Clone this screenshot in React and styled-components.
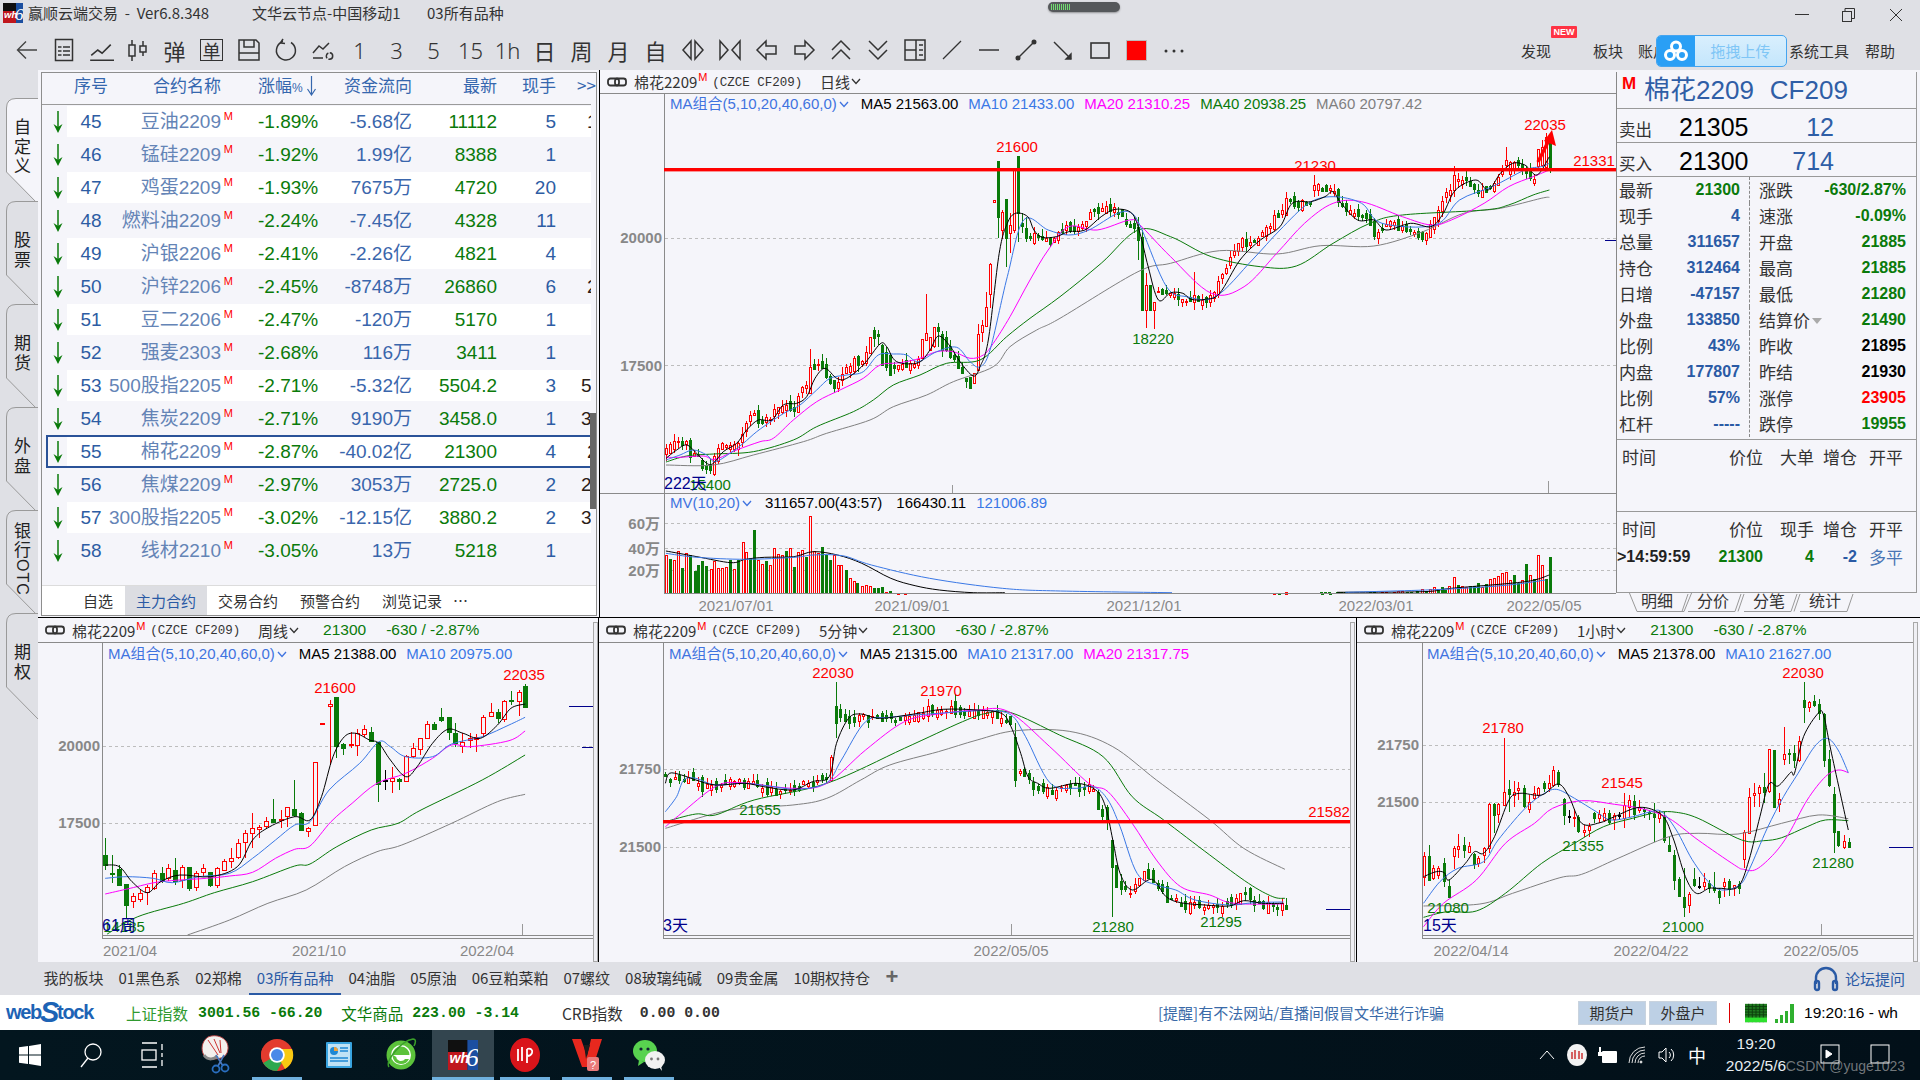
import React from 'react';
import styled, { createGlobalStyle } from 'styled-components';

const CJK = '"Noto Sans CJK SC", sans-serif';
const LAT = '"Liberation Sans", "Noto Sans CJK SC", sans-serif';
const MONO = '"Liberation Mono", "Noto Sans CJK SC", monospace';
const CHROME = '#dfe0e5';
const PANEL = '#f5f5fa';
const GREEN = '#0a7a0a';
const RED = '#ff0000';
const BLUE = '#2a5aa5';
const MA_BLUE = '#3a78e6';
const MAGENTA = '#ff00ff';
const NAVY = '#00008b';

const Global = createGlobalStyle`
  html, body { margin: 0; padding: 0; width: 1920px; height: 1080px; overflow: hidden; background: ${CHROME}; }
  * { box-sizing: border-box; }
`;

/* ---------- chart helpers ---------- */
const mk = (ox, oy, sx, sy) => (pts) => pts.map(([x, y, ...r]) => (r.length
  ? [ox + x / sx, oy + y / sy, oy + r[0] / sy, oy + r[1] / sy, oy + r[2] / sy, r[3]]
  : [ox + x / sx, oy + y / sy]));

const smooth = (p) => {
  let d = `M${p[0][0].toFixed(1)} ${p[0][1].toFixed(1)}`;
  for (let i = 0; i < p.length - 1; i += 1) {
    const a = p[Math.max(i - 1, 0)], b = p[i], c = p[i + 1], e = p[Math.min(i + 2, p.length - 1)];
    const c1x = b[0] + (c[0] - a[0]) / 6, c1y = b[1] + (c[1] - a[1]) / 6;
    const c2x = c[0] - (e[0] - b[0]) / 6, c2y = c[1] - (e[1] - b[1]) / 6;
    d += `C${c1x.toFixed(1)} ${c1y.toFixed(1)} ${c2x.toFixed(1)} ${c2y.toFixed(1)} ${c[0].toFixed(1)} ${c[1].toFixed(1)}`;
  }
  return d;
};

const interp = (p, x) => {
  if (x <= p[0][0]) return p[0][1];
  for (let i = 0; i < p.length - 1; i += 1) {
    if (x <= p[i + 1][0]) {
      const t = (x - p[i][0]) / ((p[i + 1][0] - p[i][0]) || 1);
      return p[i][1] + t * (p[i + 1][1] - p[i][1]);
    }
  }
  return p[p.length - 1][1];
};

const gen = (closes, x0, pitch, x1, seed, bn, wn, over) => {
  let s = seed;
  const rnd = () => { s = (s * 1664525 + 1013904223) % 4294967296; return s / 4294967296; };
  const out = [];
  const ov = {};
  over.forEach((c) => { ov[Math.round((c[0] - x0) / pitch)] = c; });
  let prev = interp(closes, x0);
  const n = Math.round((x1 - x0) / pitch);
  for (let i = 0; i <= n; i += 1) {
    const x = x0 + i * pitch;
    const c = interp(closes, x) + (rnd() - 0.5) * bn * 0.7;
    const o = prev + (rnd() - 0.5) * bn;
    const top = Math.min(o, c);
    const bot = Math.max(o, c) + 1;
    const wt = top - rnd() * wn;
    const wb = bot + rnd() * wn;
    const col = c < o ? 'r' : 'g';
    out.push(ov[i] ? [x, ov[i][1], ov[i][2], ov[i][3], ov[i][4], ov[i][5]] : [x, top, bot, wt, wb, col]);
    prev = c;
  }
  return out;
};

const colorOf = { r: RED, g: GREEN, k: '#000' };

const Candle = ({ c, w }) => {
  const [x, bt, bb, wt, wb, col] = c;
  const X = Math.round(x) + 0.5;
  const color = colorOf[col];
  return (
    <g shapeRendering="crispEdges">
      <line x1={X} x2={X} y1={wt} y2={wb} stroke={color} />
      <rect x={X - w / 2} y={Math.round(bt) + 0.5} width={w} height={Math.max(Math.round(bb - bt), 1)}
        fill={col === 'g' ? GREEN : PANEL} stroke={color} />
    </g>
  );
};

const MaLine = ({ pts, color }) => <path d={smooth(pts)} fill="none" stroke={color} strokeWidth="1" />;

const Grid = ({ x1, x2, y }) => (
  <line x1={x1} x2={x2} y1={y + 0.5} y2={y + 0.5} stroke="#bdbdbd" strokeDasharray="3 3" shapeRendering="crispEdges" />
);

const PriceText = styled.text`
  font: 15px ${LAT};
  fill: ${(p) => p.$c};
  text-anchor: ${(p) => p.$a || 'middle'};
`;
const AxisText = styled.text`
  font: bold 15px ${LAT};
  fill: #888;
  text-anchor: end;
`;
const DateText = styled.text`
  font: 15px ${LAT};
  fill: #888;
  text-anchor: middle;
`;
const SpanText = styled.text`
  font: 16px ${LAT};
  fill: ${NAVY};
`;

/* ---------- main chart data ---------- */
const z12 = mk(660, 250, 3, 3);
const z2 = mk(640, 0, 2.45, 3);
const z3 = mk(1280, 0, 2.45, 3);
const z5 = mk(1280, 340, 2.45, 3);
const z8 = mk(600, 480, 2.063, 3);

const mainCloses = [
  ...z12([[18, 600], [50, 575], [80, 575], [90, 610], [115, 625], [130, 655], [150, 660], [165, 610], [190, 580], [230, 580], [245, 560], [270, 490], [285, 490], [300, 520], [330, 500], [345, 470], [380, 470], [405, 470], [415, 430], [440, 410], [450, 360], [480, 340], [500, 380], [525, 410], [550, 370], [585, 330], [610, 340], [630, 270], [660, 250], [670, 340], [690, 350], [720, 335], [760, 340], [775, 330], [790, 275], [810, 290], [835, 235], [850, 270], [870, 320], [900, 350], [920, 395], [940, 395], [955, 260], [970, 230], [980, 180], [990, 60]]),
  ...z2([[878, 650], [886, 640], [898, 700], [908, 680], [918, 510], [928, 720], [940, 680], [948, 710], [960, 705], [980, 710], [1005, 725], [1025, 690], [1040, 680], [1075, 690], [1105, 640], [1130, 630], [1150, 620], [1170, 630], [1190, 660], [1210, 680], [1222, 720], [1232, 930], [1245, 930], [1260, 870], [1280, 880], [1300, 880], [1320, 900], [1345, 900], [1375, 900], [1400, 890], [1425, 820], [1450, 760], [1475, 720], [1500, 730], [1530, 690], [1555, 650]]),
  ...z3([[0, 640], [15, 600], [40, 610], [75, 610], [85, 560], [105, 565], [130, 575], [150, 620], [170, 640], [210, 640], [235, 710], [245, 690], [265, 670], [300, 680], [330, 690], [350, 720], [370, 670], [385, 630], [415, 570], [430, 530], [460, 540], [480, 570], [500, 575], [520, 550], [540, 520], [570, 490], [590, 495], [605, 520], [625, 550], [635, 470], [645, 440], [663, 430]]),
];
const mainOver = [
  ...z12([[990, 42, 132, 38, 175, 'r'], [978, 172, 230, 125, 232, 'r'], [967, 225, 245, 210, 275, 'r'], [955, 252, 360, 222, 362, 'r'], [943, 370, 400, 368, 402, 'r'], [931, 380, 412, 380, 412, 'g'], [919, 385, 395, 385, 415, 'g'], [800, 275, 285, 132, 300, 'r'], [788, 268, 325, 268, 325, 'r'], [835, 232, 245, 220, 290, 'g'], [847, 253, 300, 243, 320, 'g'], [823, 232, 290, 232, 295, 'r'], [811, 262, 302, 262, 302, 'r'], [450, 352, 430, 296, 432, 'r'], [642, 240, 265, 232, 290, 'g'], [655, 252, 258, 240, 285, 'g'], [630, 262, 310, 262, 312, 'r'], [666, 285, 345, 282, 345, 'g'], [691, 315, 375, 312, 375, 'g']]),
  ...z2([[868, 600, 606, 600, 606, 'r'], [878, 483, 650, 483, 715, 'g'], [886, 635, 690, 630, 718, 'r'], [898, 597, 715, 597, 800, 'g'], [908, 675, 700, 640, 760, 'r'], [918, 505, 690, 505, 700, 'r'], [928, 468, 640, 468, 725, 'g'], [938, 670, 680, 640, 700, 'g'], [948, 685, 715, 650, 725, 'g'], [702, 1000, 1020, 882, 1020, 'r'], [1222, 680, 720, 650, 780, 'g'], [1232, 710, 930, 690, 930, 'g'], [1242, 855, 930, 820, 985, 'r'], [1251, 855, 930, 855, 932, 'g'], [1261, 905, 930, 905, 988, 'r'], [1358, 885, 905, 815, 930, 'r']]),
  ...z3([[85, 555, 570, 525, 590, 'r'], [428, 525, 570, 498, 590, 'r'], [555, 480, 495, 440, 510, 'r'], [632, 448, 500, 448, 505, 'r'], [642, 440, 495, 420, 500, 'r'], [652, 410, 500, 400, 505, 'r'], [663, 430, 510, 420, 518, 'g']]),
];
const mainCandles = gen(mainCloses, 666, 4, 1551, 7, 9, 7, mainOver);

const mainMA = {
  ma5: [...z12([[18, 625], [50, 600], [80, 585], [110, 610], [140, 640], [160, 640], [190, 605], [230, 580], [260, 540], [295, 510], [335, 510], [370, 465], [410, 460], [440, 440], [465, 385], [495, 355], [530, 385], [560, 385], [610, 345], [660, 282], [680, 290], [710, 335], [775, 338], [810, 300], [835, 258], [870, 288], [900, 335], [940, 378], [960, 350], [985, 270]]),
    ...z2([[880, 760], [900, 670], [920, 640], [950, 650], [965, 690], [985, 712], [1020, 710], [1050, 695], [1090, 690], [1130, 650], [1165, 628], [1205, 640], [1225, 700], [1245, 800], [1270, 900], [1300, 878], [1330, 880], [1350, 898], [1385, 898], [1420, 880], [1470, 780], [1520, 720], [1568, 680]]),
    ...z3([[30, 610], [75, 605], [110, 590], [130, 575], [150, 610], [190, 660], [230, 660], [260, 690], [320, 670], [370, 680], [400, 640], [430, 570], [480, 540], [510, 570], [540, 520], [570, 490], [600, 495], [630, 525], [660, 470]])],
  ma10: [...z12([[18, 630], [60, 615], [100, 600], [140, 615], [165, 635], [210, 610], [250, 580], [290, 545], [340, 510], [380, 485], [420, 465], [470, 420], [510, 385], [560, 375], [610, 365], [655, 315], [700, 312], [740, 315], [775, 335], [830, 305], [890, 292], [930, 335], [960, 350], [990, 300]]),
    ...z2([[900, 830], [940, 660], [1000, 690], [1050, 705], [1100, 690], [1170, 640], [1205, 640], [1230, 690], [1290, 860], [1340, 890], [1410, 890], [1500, 780], [1568, 690]]),
    ...z3([[70, 610], [130, 590], [200, 610], [250, 670], [380, 675], [440, 600], [520, 560], [600, 510], [640, 500], [660, 490]])],
  ma20: [...z12([[18, 622], [60, 622], [130, 618], [165, 628], [230, 600], [300, 575], [340, 565], [400, 510], [470, 455], [540, 420], [610, 385], [660, 345], [720, 338], [780, 325], [830, 305], [880, 305], [930, 325], [970, 315], [1000, 280], [1050, 200], [1110, 90]]),
    ...z2([[1000, 750], [1050, 680], [1120, 690], [1200, 660], [1225, 675], [1300, 770], [1400, 880], [1480, 860], [1560, 760]]),
    ...z3([[60, 670], [130, 610], [200, 605], [300, 650], [370, 675], [420, 660], [500, 610], [560, 560], [620, 530], [660, 510]])],
  ma40: [...z12([[18, 636], [80, 618], [160, 612], [280, 605], [400, 570], [470, 530], [580, 485], [640, 450], [700, 405], [780, 375], [860, 340], [960, 330], [1040, 260], [1110, 205], [1200, 140]]),
    ...z2([[1130, 790], [1220, 690], [1300, 710], [1400, 770], [1520, 800]]),
    ...z3([[40, 798], [130, 730], [220, 670], [300, 645], [500, 630], [560, 615], [620, 585], [660, 570]])],
  ma60: [...z12([[18, 645], [160, 645], [280, 615], [430, 575], [500, 550], [630, 510], [700, 470], [800, 435], [880, 395], [1000, 350], [1050, 290], [1130, 240], [1200, 205]]),
    ...z2([[1220, 815], [1300, 790], [1420, 752], [1560, 762]]),
    ...z3([[100, 737], [230, 738], [350, 695], [450, 640], [540, 625], [640, 595], [660, 592]])],
};

const volFront = [[136, 225, 'r'], [145, 237, 'g'], [153, 240, 'r'], [161, 213, 'r'], [170, 263, 'g'], [178, 218, 'r'], [186, 225, 'g'], [195, 272, 'g'], [203, 255, 'g'], [211, 243, 'g'], [219, 258, 'g'], [228, 266, 'r'], [236, 243, 'r'], [244, 263, 'r'], [252, 265, 'r'], [260, 262, 'r'], [268, 240, 'g'], [277, 267, 'r'], [285, 240, 'g'], [294, 186, 'r'], [302, 216, 'r'], [310, 233, 'g'], [318, 150, 'g'], [326, 240, 'r'], [335, 252, 'r'], [343, 243, 'g'], [351, 255, 'r'], [359, 203, 'r'], [367, 222, 'r'], [375, 226, 'r'], [384, 212, 'g'], [392, 203, 'r'], [400, 262, 'g'], [408, 215, 'r'], [417, 210, 'r'], [425, 230, 'g'], [433, 108, 'r'], [441, 213, 'r'], [449, 218, 'r'], [458, 200, 'g'], [466, 225, 'g'], [474, 240, 'g'], [482, 224, 'r'], [490, 255, 'r'], [498, 255, 'r'], [507, 270, 'g'], [515, 295, 'r'], [523, 303, 'r'], [531, 308, 'g'], [540, 318, 'r'], [548, 315, 'r'], [556, 318, 'r'], [565, 325, 'g'], [573, 325, 'g'], [581, 322, 'g'], [590, 337, 'r'], [598, 334, 'g'], [615, 338, 'r'], [630, 338, 'r'], [1390, 338, 'r'], [1400, 338, 'g'], [1415, 338, 'r'], [1490, 338, 'g'], [1505, 338, 'g'], [1522, 335, 'g'], [1540, 337, 'g']]
  .map(([x, y, c]) => [600 + x / 2.063, 480 + y / 3, c]);
const volBack = [[15, 757, 'r'], [100, 757, 'g'], [110, 757, 'g'], [120, 757, 'g'], [140, 755, 'g'], [150, 757, 'g'], [160, 755, 'g'], [220, 755, 'g'], [230, 755, 'g'], [250, 755, 'r'], [260, 755, 'r'], [280, 755, 'r'], [290, 752, 'r'], [300, 752, 'r'], [310, 755, 'g'], [320, 755, 'g'], [335, 752, 'g'], [348, 748, 'r'], [357, 752, 'g'], [367, 748, 'r'], [377, 740, 'r'], [386, 748, 'g'], [396, 742, 'g'], [405, 750, 'g'], [415, 738, 'r'], [427, 712, 'r'], [436, 735, 'g'], [445, 737, 'r'], [455, 742, 'r'], [465, 738, 'g'], [475, 738, 'g'], [485, 730, 'g'], [495, 742, 'r'], [505, 733, 'g'], [514, 718, 'r'], [524, 715, 'r'], [534, 708, 'r'], [543, 700, 'r'], [553, 697, 'r'], [563, 720, 'r'], [573, 706, 'g'], [583, 730, 'g'], [593, 720, 'r'], [603, 672, 'g'], [613, 706, 'r'], [622, 718, 'g'], [633, 646, 'r'], [642, 676, 'r'], [652, 717, 'g'], [662, 651, 'g']]
  .map(([x, y, c]) => [1280 + x / 2.45, 340 + y / 3, c]);
const volBars = [...volFront, ...volBack];
const volBlack = [...z8([[136, 213], [200, 230], [270, 248], [300, 238], [340, 232], [400, 230], [440, 215], [490, 225], [540, 250], [600, 295], [650, 317], [700, 330], [770, 338], [835, 338]])];
const volBlue = [...z8([[136, 220], [200, 232], [300, 238], [400, 232], [440, 225], [500, 227], [560, 255], [680, 295], [830, 325], [950, 333], [1180, 338]])];
const volBlackEnd = z5([[140, 757], [350, 755], [420, 745], [600, 725], [660, 705]]);
const volBlueEnd = z5([[160, 757], [400, 748], [560, 735], [650, 720]]);

const MainChart = () => (
  <ChartSvg width="1016" height="523" viewBox="600 94 1016 523">
    <Grid x1={665} x2={1616} y={238} />
    <Grid x1={665} x2={1616} y={365} />
    <line x1="664.5" x2="664.5" y1="94" y2="593" stroke="#8a8a8a" shapeRendering="crispEdges" />
    <AxisText x="662" y="243">20000</AxisText>
    <AxisText x="662" y="371">17500</AxisText>
    {mainCandles.map((c, i) => <Candle key={i} c={c} w={2} />)}
    <MaLine pts={mainMA.ma60} color="#808080" />
    <MaLine pts={mainMA.ma40} color={GREEN} />
    <MaLine pts={mainMA.ma20} color={MAGENTA} />
    <MaLine pts={mainMA.ma10} color={MA_BLUE} />
    <MaLine pts={mainMA.ma5} color="#000" />
    <rect x="664" y="168" width="952" height="3.4" fill={RED} />
    <path d="M1538 162L1551 136" stroke={RED} strokeWidth="3.5" fill="none" />
    <path d="M1552 130L1556 146L1544 141Z" fill={RED} />
    <PriceText x="1017" y="152" $c={RED}>21600</PriceText>
    <PriceText x="1315" y="171" $c={RED}>21230</PriceText>
    <PriceText x="1545" y="130" $c={RED}>22035</PriceText>
    <PriceText x="1594" y="166" $c={RED}>21331</PriceText>
    <PriceText x="1153" y="344" $c={GREEN}>18220</PriceText>
    <PriceText x="710" y="490" $c={GREEN}>15400</PriceText>
    <SpanText x="664" y="489">222天</SpanText>
    <line x1="1605" x2="1616" y1="240.5" y2="240.5" stroke={NAVY} />
    <line x1="952.5" x2="952.5" y1="485" y2="493" stroke="#999" />
    <line x1="1548.5" x2="1548.5" y1="481" y2="493" stroke="#999" />
    <line x1="600" x2="1616" y1="493.5" y2="493.5" stroke="#8a8a8a" />
    <Grid x1={665} x2={1616} y={523} />
    <Grid x1={665} x2={1616} y={548} />
    <Grid x1={665} x2={1616} y={570} />
    <AxisText x="660" y="529">60万</AxisText>
    <AxisText x="660" y="554">40万</AxisText>
    <AxisText x="660" y="576">20万</AxisText>
    <g shapeRendering="crispEdges">
      {volBars.map(([x, y, c], i) => {
        const X = Math.round(x) + 0.5;
        return <rect key={i} x={X - 1} y={Math.round(y) + 0.5} width="2" height={Math.max(593 - Math.round(y), 1)} fill={c === 'g' ? GREEN : PANEL} stroke={c === 'g' ? GREEN : RED} />;
      })}
    </g>
    <MaLine pts={volBlack} color="#000" />
    <MaLine pts={volBlue} color={MA_BLUE} />
    <MaLine pts={volBlackEnd} color="#000" />
    <MaLine pts={volBlueEnd} color={MA_BLUE} />
    <line x1="664" x2="1616" y1="593.5" y2="593.5" stroke="#8a8a8a" />
    <DateText x="736" y="611">2021/07/01</DateText>
    <DateText x="912" y="611">2021/09/01</DateText>
    <DateText x="1144" y="611">2021/12/01</DateText>
    <DateText x="1376" y="611">2022/03/01</DateText>
    <DateText x="1544" y="611">2022/05/05</DateText>
  </ChartSvg>
);

/* ---------- weekly ---------- */
const z9 = mk(0, 610, 2.613, 3);
const weekCandles = z9([[275, 735, 765, 685, 780, 'g'], [293, 790, 792, 735, 820, 'g'], [312, 778, 825, 765, 825, 'g'], [330, 822, 885, 822, 925, 'g'], [348, 858, 872, 850, 895, 'r'], [367, 848, 865, 840, 875, 'r'], [385, 830, 845, 825, 885, 'r'], [403, 790, 835, 780, 840, 'r'], [422, 790, 815, 770, 820, 'g'], [440, 775, 805, 762, 812, 'r'], [458, 780, 812, 745, 825, 'g'], [476, 772, 812, 765, 835, 'r'], [495, 772, 835, 770, 842, 'g'], [513, 790, 832, 782, 842, 'r'], [531, 775, 787, 762, 797, 'r'], [550, 787, 827, 785, 830, 'g'], [568, 775, 825, 770, 835, 'r'], [586, 752, 778, 748, 780, 'r'], [604, 745, 755, 715, 775, 'r'], [623, 700, 742, 688, 748, 'r'], [641, 670, 698, 660, 745, 'r'], [659, 655, 670, 610, 715, 'r'], [678, 650, 655, 645, 685, 'r'], [696, 632, 648, 622, 655, 'r'], [714, 628, 636, 568, 640, 'g'], [733, 628, 632, 600, 655, 'r'], [751, 592, 620, 590, 652, 'r'], [769, 598, 615, 510, 620, 'g'], [787, 610, 660, 605, 660, 'g'], [806, 653, 663, 650, 680, 'r'], [824, 457, 646, 455, 648, 'r'], [842, 340, 344, 340, 344, 'r'], [861, 283, 290, 270, 465, 'r'], [879, 262, 410, 262, 445, 'g'], [897, 403, 415, 400, 435, 'g'], [916, 403, 406, 365, 415, 'r'], [934, 370, 407, 358, 437, 'r'], [952, 358, 372, 345, 380, 'r'], [970, 367, 395, 352, 395, 'g'], [989, 395, 522, 395, 575, 'g'], [1007, 510, 512, 480, 540, 'k'], [1025, 503, 512, 470, 548, 'r'], [1043, 508, 514, 505, 540, 'g'], [1062, 437, 512, 435, 515, 'r'], [1080, 415, 440, 400, 445, 'r'], [1098, 385, 418, 385, 435, 'r'], [1117, 343, 385, 332, 388, 'r'], [1135, 342, 357, 335, 358, 'g'], [1153, 322, 330, 295, 335, 'g'], [1172, 322, 368, 320, 390, 'g'], [1190, 370, 400, 340, 410, 'g'], [1208, 395, 408, 370, 428, 'r'], [1227, 383, 390, 368, 415, 'r'], [1245, 380, 385, 372, 425, 'r'], [1263, 320, 368, 315, 382, 'r'], [1282, 307, 320, 280, 322, 'r'], [1300, 307, 326, 298, 340, 'g'], [1318, 272, 325, 270, 335, 'r'], [1336, 270, 274, 243, 285, 'g'], [1355, 247, 274, 240, 318, 'r'], [1373, 228, 290, 222, 295, 'g']]);
const weekMA = {
  ma5: z9([[275, 765], [312, 770], [345, 815], [385, 848], [420, 815], [470, 795], [550, 800], [620, 770], [660, 690], [705, 650], [770, 620], [810, 630], [840, 560], [870, 440], [900, 380], [930, 370], [965, 390], [990, 400], [1020, 450], [1060, 500], [1090, 470], [1130, 400], [1170, 358], [1210, 370], [1255, 385], [1300, 345], [1335, 295], [1373, 282]]),
  ma10: z9([[275, 805], [330, 800], [400, 805], [450, 818], [520, 800], [600, 790], [660, 745], [720, 690], [770, 645], [810, 635], [860, 540], [940, 460], [990, 395], [1020, 410], [1060, 440], [1130, 440], [1180, 402], [1260, 380], [1330, 345], [1372, 322]]),
  ma20: z9([[275, 852], [340, 835], [420, 815], [540, 805], [600, 798], [660, 787], [720, 745], [770, 718], [810, 708], [865, 635], [920, 580], [985, 520], [1060, 490], [1130, 445], [1180, 405], [1230, 410], [1330, 392], [1372, 363]]),
  ma40: z9([[280, 972], [360, 920], [480, 880], [560, 848], [660, 815], [770, 768], [810, 762], [880, 710], [970, 660], [1040, 640], [1100, 600], [1260, 510], [1372, 435]]),
  ma60: z9([[490, 975], [600, 930], [700, 880], [800, 840], [900, 770], [985, 725], [1050, 705], [1180, 640], [1300, 575], [1372, 553]]),
};

const ChartFrame = ({ axis, right, children }) => (
  <>
    <line x1={axis + 0.5} x2={axis + 0.5} y1="643" y2="938" stroke="#8a8a8a" shapeRendering="crispEdges" />
    {children}
    <line x1={axis} x2={right} y1="935.5" y2="935.5" stroke="#8a8a8a" shapeRendering="crispEdges" />
    <line x1={axis} x2={right} y1="938.5" y2="938.5" stroke="#8a8a8a" shapeRendering="crispEdges" />
  </>
);

const WeekChart = () => (
  <ChartSvg width="555" height="319" viewBox="38 643 555 319">
    <ChartFrame axis={102} right={593}>
      <Grid x1={103} x2={593} y={746} />
      <Grid x1={103} x2={593} y={823} />
      <AxisText x="100" y="751">20000</AxisText>
      <AxisText x="100" y="828">17500</AxisText>
      {weekCandles.map((c, i) => <Candle key={i} c={c} w={4} />)}
      <MaLine pts={weekMA.ma60} color="#808080" />
      <MaLine pts={weekMA.ma40} color={GREEN} />
      <MaLine pts={weekMA.ma20} color={MAGENTA} />
      <MaLine pts={weekMA.ma10} color={MA_BLUE} />
      <MaLine pts={weekMA.ma5} color="#000" />
      <PriceText x="335" y="693" $c={RED}>21600</PriceText>
      <PriceText x="524" y="680" $c={RED}>22035</PriceText>
      <PriceText x="124" y="932" $c={GREEN}>14185</PriceText>
      <SpanText x="102" y="931">61周</SpanText>
      <line x1="569" x2="593" y1="706.5" y2="706.5" stroke={NAVY} />
      <line x1="582" x2="593" y1="747.5" y2="747.5" stroke={NAVY} />
      <line x1="522.5" x2="522.5" y1="924" y2="935" stroke="#999" />
      <DateText x="130" y="956">2021/04</DateText>
      <DateText x="319" y="956">2021/10</DateText>
      <DateText x="487" y="956">2022/04</DateText>
    </ChartFrame>
  </ChartSvg>
);

/* ---------- 5 min ---------- */
const z10 = mk(600, 610, 2.063, 3);
const m5Closes = z10([[137, 500], [150, 510], [190, 510], [220, 535], [260, 520], [310, 520], [340, 540], [400, 540], [425, 520], [470, 505], [475, 470], [484, 300], [500, 330], [540, 320], [570, 330], [620, 318], [680, 300], [720, 300], [780, 300], [830, 315], [850, 340], [855, 500], [870, 470], [890, 520], [910, 550], [930, 540], [980, 525], [1020, 535], [1030, 590], [1045, 620], [1055, 680], [1065, 800], [1080, 840], [1100, 835], [1125, 790], [1145, 820], [1170, 870], [1200, 880], [1250, 885], [1300, 890], [1325, 855], [1360, 880], [1400, 885], [1417, 895]]);
const m5Over = z10([[484, 288, 340, 215, 385, 'g'], [475, 440, 510, 435, 512, 'r'], [855, 380, 510, 340, 530, 'g'], [1030, 545, 595, 540, 600, 'g'], [1045, 590, 630, 585, 660, 'g'], [1053, 680, 700, 650, 720, 'g'], [1062, 690, 770, 690, 920, 'g'], [1071, 765, 830, 765, 835, 'g'], [1327, 848, 880, 848, 885, 'r'], [1127, 782, 808, 782, 810, 'r'], [1140, 780, 815, 775, 820, 'g'], [1417, 885, 898, 865, 900, 'g']]);
const m5Candles = gen(m5Closes, 666.4, 4.6, 1287, 11, 12, 7, m5Over);
const m5MA = {
  ma5: z10([[137, 520], [145, 490], [170, 495], [200, 510], [240, 525], [300, 520], [340, 530], [400, 540], [440, 515], [475, 500], [490, 400], [515, 325], [540, 312], [580, 325], [650, 312], [710, 298], [780, 300], [830, 310], [850, 350], [870, 430], [885, 500], [905, 520], [930, 535], [985, 520], [1025, 540], [1045, 590], [1060, 690], [1075, 790], [1100, 840], [1140, 808], [1170, 860], [1200, 878], [1250, 885], [1300, 888], [1330, 872], [1370, 880], [1412, 880]]),
  ma10: z10([[137, 605], [160, 560], [175, 510], [200, 505], [240, 525], [300, 520], [360, 530], [410, 538], [470, 518], [500, 450], [550, 335], [600, 322], [700, 310], [800, 302], [850, 315], [880, 380], [930, 518], [980, 535], [1020, 530], [1050, 570], [1075, 650], [1110, 790], [1150, 825], [1190, 840], [1230, 870], [1300, 885], [1350, 878], [1412, 876]]),
  ma20: z10([[137, 650], [170, 610], [240, 530], [290, 518], [400, 535], [470, 520], [550, 420], [630, 335], [700, 312], [780, 300], [845, 305], [930, 410], [1010, 520], [1050, 545], [1100, 640], [1150, 750], [1200, 830], [1260, 855], [1310, 880], [1412, 882]]),
  ma40: z10([[137, 635], [200, 612], [240, 615], [320, 570], [470, 520], [630, 415], [750, 335], [800, 310], [850, 308], [950, 375], [1040, 440], [1100, 560], [1165, 630], [1260, 735], [1340, 820], [1390, 860], [1415, 865]]),
  ma60: z10([[137, 655], [270, 600], [400, 585], [470, 565], [540, 510], [600, 465], [700, 425], [780, 390], [860, 362], [970, 364], [1060, 410], [1150, 510], [1260, 630], [1330, 715], [1415, 778]]),
};

const FiveChart = () => (
  <ChartSvg width="751" height="319" viewBox="600 643 751 319">
    <ChartFrame axis={664} right={1351}>
      <Grid x1={665} x2={1351} y={769} />
      <Grid x1={665} x2={1351} y={847} />
      <AxisText x="662" y="774">21750</AxisText>
      <AxisText x="662" y="852">21500</AxisText>
      {m5Candles.map((c, i) => <Candle key={i} c={c} w={2} />)}
      <MaLine pts={m5MA.ma60} color="#808080" />
      <MaLine pts={m5MA.ma40} color={GREEN} />
      <MaLine pts={m5MA.ma20} color={MAGENTA} />
      <MaLine pts={m5MA.ma10} color={MA_BLUE} />
      <MaLine pts={m5MA.ma5} color="#000" />
      <rect x="664" y="820" width="687" height="3.4" fill={RED} />
      <PriceText x="834" y="678" $c={RED}>22030</PriceText>
      <PriceText x="942" y="696" $c={RED}>21970</PriceText>
      <PriceText x="761" y="815" $c={GREEN}>21655</PriceText>
      <PriceText x="1330" y="817" $c={RED}>21582</PriceText>
      <PriceText x="1114" y="932" $c={GREEN}>21280</PriceText>
      <PriceText x="1222" y="927" $c={GREEN}>21295</PriceText>
      <SpanText x="664" y="931">3天</SpanText>
      <line x1="1327" x2="1351" y1="909.5" y2="909.5" stroke={NAVY} />
      <line x1="1012.5" x2="1012.5" y1="924" y2="935" stroke="#999" />
      <DateText x="1012" y="956">2022/05/05</DateText>
    </ChartFrame>
  </ChartSvg>
);

/* ---------- 1 hour ---------- */
const z11 = mk(1350, 610, 2.75, 3);
const hourCandles = z11([[205, 737, 800, 725, 828, 'r'], [219, 737, 810, 706, 812, 'g'], [232, 775, 805, 765, 810, 'r'], [246, 775, 795, 768, 808, 'r'], [260, 760, 815, 745, 830, 'g'], [274, 828, 862, 810, 865, 'g'], [288, 715, 740, 708, 778, 'r'], [301, 708, 718, 672, 745, 'r'], [315, 706, 722, 680, 745, 'g'], [329, 708, 725, 695, 730, 'r'], [343, 732, 762, 728, 778, 'g'], [356, 745, 760, 738, 772, 'r'], [370, 715, 735, 712, 760, 'r'], [384, 582, 715, 578, 730, 'r'], [398, 582, 615, 578, 670, 'g'], [411, 583, 612, 580, 640, 'r'], [425, 545, 585, 385, 585, 'r'], [439, 538, 552, 510, 605, 'g'], [453, 545, 555, 512, 590, 'r'], [466, 535, 542, 515, 570, 'r'], [480, 535, 590, 525, 595, 'g'], [494, 575, 595, 555, 608, 'r'], [508, 550, 565, 528, 570, 'r'], [521, 534, 555, 530, 565, 'r'], [535, 520, 535, 512, 545, 'g'], [549, 520, 535, 495, 545, 'r'], [562, 480, 525, 468, 530, 'r'], [576, 485, 520, 480, 530, 'g'], [590, 568, 615, 565, 645, 'g'], [604, 617, 618, 600, 640, 'k'], [618, 622, 626, 598, 650, 'r'], [631, 620, 662, 615, 668, 'g'], [645, 660, 665, 645, 680, 'r'], [659, 647, 660, 640, 680, 'r'], [673, 610, 625, 605, 640, 'g'], [687, 612, 625, 600, 640, 'r'], [700, 608, 630, 595, 635, 'r'], [714, 608, 635, 600, 645, 'g'], [728, 614, 625, 610, 660, 'r'], [742, 614, 615, 605, 630, 'k'], [755, 585, 625, 548, 655, 'r'], [769, 570, 590, 555, 620, 'r'], [783, 572, 610, 555, 630, 'g'], [797, 590, 600, 570, 610, 'r'], [811, 598, 605, 590, 625, 'g'], [825, 606, 610, 600, 630, 'g'], [838, 612, 620, 578, 695, 'g'], [852, 610, 625, 600, 640, 'r'], [866, 622, 690, 605, 700, 'g'], [880, 704, 722, 678, 725, 'g'], [894, 735, 810, 720, 840, 'g'], [907, 808, 860, 800, 862, 'g'], [921, 860, 890, 775, 920, 'g'], [934, 853, 885, 845, 908, 'r'], [948, 808, 825, 775, 830, 'g'], [962, 827, 828, 800, 838, 'k'], [975, 815, 828, 788, 840, 'r'], [989, 820, 832, 810, 850, 'g'], [1003, 830, 838, 785, 850, 'g'], [1017, 842, 860, 835, 882, 'g'], [1031, 815, 828, 805, 860, 'r'], [1044, 813, 838, 808, 858, 'g'], [1058, 825, 830, 825, 858, 'r'], [1072, 822, 835, 812, 852, 'g'], [1085, 665, 745, 660, 775, 'r'], [1099, 562, 670, 535, 672, 'r'], [1113, 550, 556, 520, 590, 'r'], [1127, 530, 548, 525, 590, 'r'], [1140, 530, 545, 488, 580, 'g'], [1154, 418, 545, 416, 548, 'r'], [1168, 420, 590, 420, 592, 'g'], [1182, 568, 582, 548, 605, 'r'], [1195, 433, 448, 350, 465, 'r'], [1209, 430, 433, 418, 462, 'g'], [1223, 430, 450, 405, 475, 'g'], [1237, 393, 450, 378, 455, 'r'], [1250, 270, 290, 215, 338, 'g'], [1264, 275, 290, 272, 305, 'r'], [1278, 272, 285, 255, 290, 'g'], [1292, 283, 310, 268, 330, 'g'], [1305, 312, 450, 310, 470, 'g'], [1319, 448, 525, 420, 530, 'g'], [1333, 552, 665, 532, 728, 'g'], [1346, 664, 705, 664, 712, 'g'], [1360, 693, 710, 675, 718, 'r'], [1374, 697, 713, 685, 715, 'g']]);
const hourMA = {
  ma5: z11([[205, 800], [240, 785], [262, 788], [275, 810], [320, 760], [345, 725], [370, 730], [400, 680], [440, 570], [470, 550], [530, 555], [575, 522], [605, 560], [640, 640], [690, 638], [730, 620], [800, 592], [860, 615], [890, 680], [925, 800], [955, 850], [990, 835], [1020, 835], [1070, 830], [1100, 750], [1130, 620], [1155, 522], [1180, 528], [1215, 487], [1225, 490], [1250, 380], [1290, 310], [1305, 315], [1325, 420], [1373, 660]]),
  ma10: z11([[205, 880], [250, 815], [300, 775], [370, 755], [410, 690], [480, 600], [530, 555], [570, 538], [620, 565], [680, 605], [720, 630], [780, 620], [830, 605], [860, 605], [900, 660], [950, 760], [1010, 835], [1070, 828], [1100, 780], [1150, 655], [1195, 560], [1235, 490], [1280, 410], [1315, 385], [1345, 420], [1373, 488]]),
  ma20: z11([[205, 950], [260, 880], [350, 810], [430, 700], [510, 640], [560, 595], [640, 572], [730, 583], [810, 597], [880, 625], [960, 690], [1060, 765], [1085, 778], [1120, 778], [1170, 730], [1210, 670], [1260, 570], [1310, 500], [1345, 480], [1373, 488]]),
  ma40: z11([[205, 922], [270, 905], [350, 903], [430, 850], [530, 760], [620, 700], [700, 650], [780, 625], [850, 607], [900, 607], [960, 625], [1080, 690], [1140, 692], [1190, 683], [1260, 650], [1310, 630], [1373, 632]]),
  ma60: z11([[205, 888], [360, 882], [450, 850], [580, 803], [640, 793], [740, 745], [880, 680], [960, 670], [1070, 672], [1190, 640], [1290, 615], [1373, 626]]),
};

const HourChart = () => (
  <ChartSvg width="556" height="319" viewBox="1358 643 556 319">
    <ChartFrame axis={1423} right={1914}>
      <Grid x1={1424} x2={1914} y={745} />
      <Grid x1={1424} x2={1914} y={802} />
      <AxisText x="1420" y="750">21750</AxisText>
      <AxisText x="1420" y="807">21500</AxisText>
      {hourCandles.map((c, i) => <Candle key={i} c={c} w={2} />)}
      <MaLine pts={hourMA.ma60} color="#808080" />
      <MaLine pts={hourMA.ma40} color={GREEN} />
      <MaLine pts={hourMA.ma20} color={MAGENTA} />
      <MaLine pts={hourMA.ma10} color={MA_BLUE} />
      <MaLine pts={hourMA.ma5} color="#000" />
      <PriceText x="1504" y="733" $c={RED}>21780</PriceText>
      <PriceText x="1623" y="788" $c={RED}>21545</PriceText>
      <PriceText x="1804" y="678" $c={RED}>22030</PriceText>
      <PriceText x="1584" y="851" $c={GREEN}>21355</PriceText>
      <PriceText x="1449" y="913" $c={GREEN}>21080</PriceText>
      <PriceText x="1684" y="932" $c={GREEN}>21000</PriceText>
      <PriceText x="1834" y="868" $c={GREEN}>21280</PriceText>
      <SpanText x="1424" y="931">15天</SpanText>
      <line x1="1890" x2="1914" y1="847.5" y2="847.5" stroke={NAVY} />
      <line x1="1822.5" x2="1822.5" y1="924" y2="935" stroke="#999" />
      <DateText x="1472" y="956">2022/04/14</DateText>
      <DateText x="1652" y="956">2022/04/22</DateText>
      <DateText x="1822" y="956">2022/05/05</DateText>
    </ChartFrame>
  </ChartSvg>
);

/* ---------- layout styled components ---------- */
const Window = styled.div`
  width: 1920px; height: 1080px; display: flex; flex-direction: column;
  background: ${CHROME}; font-family: ${CJK}; color: #333; position: relative; overflow: hidden;
`;
const TitleBar = styled.div`
  height: 30px; display: flex; align-items: center; position: relative; font-size: 15px; color: #333; flex: none;
`;
const LogoWrap = styled.div`
  width: 28px; display: flex; justify-content: center; padding-left: 2px; padding-right: 4px; margin-top: -4px;
`;
const TitleText = styled.span`
  width: ${(p) => p.$w}px; white-space: nowrap; margin-top: -6px;
`;
const Pill = styled.div`
  position: absolute; left: 1048px; top: 2px; width: 72px; height: 10px; border-radius: 5px;
  background: #55585b; box-shadow: 0 1px 2px rgba(0,0,0,.35); display: flex; gap: 1px; padding: 2px 3px; overflow: hidden;
`;
const PillTick = styled.i`
  width: 1px; height: 6px; background: #6fe06f;
`;
const WinControls = styled.div`
  margin-left: auto; display: flex; width: 142px; margin-right: 0; color: #333;
`;
const WinBtn = styled.div`
  width: 48px; height: 30px; display: flex; align-items: center; justify-content: center;
`;
const Toolbar = styled.div`
  height: 40px; flex: none; display: flex; align-items: center; padding-left: 8px; position: relative;
`;
const ToolBtn = styled.div`
  width: 37px; height: 40px; display: flex; align-items: center; justify-content: center; flex: none; color: #333;
`;
const ToolGlyph = styled.span`
  font: 300 22px "Noto Sans", ${CJK}; line-height: 1; color: #333;
`;
const ToolCjk = styled.span`
  font: 22px ${CJK}; line-height: 1; color: #333;
  ${(p) => p.$box && `border: 1.5px solid #333; font-size: 18px; padding: 1px 0; width: 23px; text-align: center;`}
`;
const RedSwatch = styled.div`
  width: 19px; height: 19px; background: ${RED}; outline: 1px solid #bbb;
`;
const MenuGroup = styled.div`
  margin-left: auto; display: flex; align-items: center; font-size: 15px; padding-right: 25px; color: #333;
`;
const MenuItem = styled.span`
  margin-left: ${(p) => p.$ml || 0}px; position: relative; white-space: nowrap; width: ${(p) => p.$w}px;
`;
const NewBadge = styled.span`
  position: absolute; left: 30px; top: -14px; width: 26px; height: 12px; background: #f34; color: #fff;
  font: bold 9px/12px ${LAT}; text-align: center; border-radius: 1px;
`;
const UploadFloat = styled.div`
  position: absolute; left: 1656px; top: 5px; width: 131px; height: 32px; border-radius: 5px; overflow: hidden;
  border: 1px solid #45a5f0; display: flex; background: linear-gradient(#d9effd, #c4e6fc);
`;
const UploadIcon = styled.div`
  width: 38px; background: #2a9ff5; display: flex; align-items: center; justify-content: center;
`;
const UploadText = styled.div`
  flex: 1; text-align: center; font-size: 15px; line-height: 30px; color: #7fc6f6;
`;

const Main = styled.div`
  height: 892px; flex: none; display: flex;
`;
const SideTabs = styled.div`
  width: 38px; flex: none; padding-top: 28px; display: flex; flex-direction: column;
`;
const SideTabBox = styled.div`
  height: 103px; width: 38px; flex: none; position: relative; padding: 0 2px 8px 9px;
  display: flex; flex-direction: column; align-items: center; justify-content: center;
  font-size: 17px; line-height: 19.5px; color: #222;
`;
const SideShape = styled.svg`
  position: absolute; left: 6px; top: 0; overflow: visible; z-index: 0;
`;
const SideChar = styled.span`
  position: relative; z-index: 1;
`;
const SideRot = styled.span`
  position: relative; z-index: 1; writing-mode: vertical-rl; font: 16px ${LAT}; line-height: 17px; letter-spacing: 1px;
`;
const Content = styled.div`
  flex: 1; display: flex; flex-direction: column; min-width: 0;
`;
const TopRow = styled.div`
  height: 547px; flex: none; display: flex; background: ${PANEL};
`;
const BlackRule = styled.div`
  height: 1px; background: #000; flex: none;
`;
const BottomRow = styled.div`
  flex: 1; display: flex; background: ${PANEL}; min-height: 0;
`;

/* watch list */
const WatchOuter = styled.div`
  width: 562px; flex: none; padding: 2px 2px 1px 3px; border-right: 1px solid #000;
`;
const WatchFrame = styled.div`
  height: 100%; border: 1px solid #8e8e8e; display: flex; flex-direction: column; position: relative; background: ${PANEL};
`;
const WatchHead = styled.div`
  height: 32px; flex: none; width: 549px; border-bottom: 1px solid #9a9a9a; font-size: 17px; color: #3567ae; line-height: 22px;
`;
const colTpl = '25px 48px 118px 84px 95px 85px 59px 35px';
const HeadGrid = styled.div`
  display: grid; grid-template-columns: ${colTpl}; height: 100%; align-items: center; padding-bottom: 7px;
`;
const Th = styled.span`
  grid-column: ${(p) => p.$col}; text-align: ${(p) => p.$a || 'right'};
  padding-right: ${(p) => p.$pr || 0}px; padding-left: ${(p) => p.$pl || 0}px; white-space: nowrap;
`;
const ThSmall = styled.span`
  font: 12px ${LAT}; margin-right: 4px;
`;
const Rows = styled.div`
  flex: 1; width: 549px; overflow: hidden;
`;
const Row = styled.div`
  height: 33px; display: grid; grid-template-columns: ${colTpl}; align-items: center; position: relative;
  font: 19px/22px ${LAT}; border-block: 1px solid transparent; background-clip: padding-box;
  background-image: ${(p) => (p.$white ? 'linear-gradient(90deg, transparent 25px, #fff 25px)' : 'none')};
  ${(p) => p.$sel && `&::after { content: ''; position: absolute; left: 4px; right: -3px; top: -1px; bottom: -1px; border: 2px solid #2a5298; pointer-events: none; }`}
`;
const ArrowCell = styled.span`
  display: flex; justify-content: flex-end; padding-right: 3px;
`;
const SeqCell = styled.span`
  text-align: center; color: #2d5ca3; font-size: 19px;
`;
const NameCell = styled.span`
  text-align: right; color: #6484b6; white-space: nowrap; display: flex; justify-content: flex-end;
  margin-left: -30px;
`;
const Sup = styled.span`
  font: 11px/14px ${LAT}; color: ${RED}; width: 12px; text-align: right; display: block; margin-top: -2px;
`;
const PctCell = styled.span`
  color: ${GREEN}; padding-left: 25px; white-space: nowrap;
`;
const FlowCell = styled.span`
  text-align: right; color: #3a66ac; white-space: nowrap;
`;
const LastCell = styled.span`
  text-align: right; color: ${GREEN};
`;
const HandCell = styled.span`
  text-align: right; color: #2d5ca3;
`;
const ExtraCell = styled.span`
  overflow: hidden; white-space: nowrap; color: #2b2016; padding-left: ${(p) => p.$pl}px;
`;
const Scroll = styled.div`
  position: absolute; right: 0; top: 340px; width: 6px; height: 96px; background: #666;
`;
const WatchTabs = styled.div`
  height: 30px; flex: none; background: #fff; border-top: 1px solid #dcdcdc; display: flex; align-items: center;
  padding-left: 32px; font-size: 15px; color: #333;
`;
const WatchTab = styled.span`
  width: ${(p) => p.$w || 82}px; height: 100%; text-align: center; line-height: 29px; white-space: nowrap;
  background: ${(p) => (p.$on ? '#dcdde2' : 'transparent')}; color: ${(p) => (p.$on ? '#2a5aa5' : '#333')};
  ${(p) => p.$w === 51 && 'text-align: left; padding-left: 9px;'}
`;

/* chart panels */
const ChartCol = styled.div`
  flex: none; width: ${(p) => p.$w}px; display: flex; flex-direction: column; position: relative; min-height: 0;
`;
const ChartHead = styled.div`
  height: ${(p) => p.$h}px; flex: none; border-bottom: 1px solid #8a8a8a; display: flex; align-items: center;
  padding-left: ${(p) => p.$pl || 7}px; font-size: 15px; color: #333; white-space: nowrap;
`;
const NameBlock = styled.div`
  display: flex; align-items: center; width: 213px; margin-left: 0; flex: none;
`;
const NameText = styled.span`
  margin-left: 7px; display: flex; align-items: center;
`;
const MonoText = styled.span`
  font: 12.5px ${MONO}; margin: 2px 0 0 5px; color: #333;
`;
const HeadSup = styled.span`
  font: 11px ${LAT}; color: ${RED}; align-self: flex-start; line-height: 12px; margin-left: 1px; width: 9px;
`;
const Period = styled.span`
  display: flex; align-items: center; gap: 1px; margin-right: 24px; flex: none;
`;
const HeadNum = styled.span`
  font: 15.5px ${LAT}; color: ${(p) => p.$c || GREEN}; margin-right: 20px;
`;
const ChartSvg = styled.svg`
  display: block; flex: none;
`;
const Legend = styled.div`
  position: absolute; left: ${(p) => p.$left}px; top: ${(p) => p.$top}px; display: flex; gap: 10px; align-items: center;
  font: 15px/20px ${LAT}; white-space: nowrap; height: 20px;
`;
const LegendItem = styled.span`
  color: ${(p) => p.$c}; margin-left: ${(p) => p.$ml || 0}px;
`;
const LegendHead = styled.span`
  color: #3f73e0; display: flex; align-items: center; gap: 2px; margin-right: ${(p) => p.$mr || 2}px;
`;
const ScrollStrip = styled.div`
  flex: none; width: 5px; border: 1px solid #a8a8a8; background: #efeff4; margin-top: 4px;
`;
const PanelBox = styled.div`
  flex: none; width: ${(p) => p.$w}px; display: flex; border-right: ${(p) => (p.$end ? 0 : '1px solid #000')}; background: ${PANEL};
`;

/* quote */
const Quote = styled.div`
  flex: 1; min-width: 0; padding-top: 2px; display: flex; flex-direction: column; background: ${PANEL};
`;
const QuoteBox = styled.div`
  width: 301px; height: 521px; flex: none; border-left: 1px solid #888; border-right: 1px solid #999; border-bottom: 1px solid #999;
  display: flex; flex-direction: column;
`;
const QuoteHead = styled.div`
  height: 37px; flex: none; border-bottom: 1px solid #999; display: flex; position: relative; padding-left: 27px; align-items: center;
  font: 26px/30px ${LAT}; color: #2f5ea6; gap: 16px; white-space: nowrap;
`;
const MBadge = styled.span`
  position: absolute; left: 5px; top: 2px; font: bold 17px ${LAT}; color: ${RED};
`;
const BookRow = styled.div`
  height: 34px; flex: none; border-bottom: 1px solid #999; display: grid; grid-template-columns: 62px 78px 77px; align-items: center;
`;
const BookLabel = styled.span`
  font-size: 16.5px; padding-left: 2px; padding-top: 7px; color: #333;
`;
const BookPrice = styled.span`
  font: 25px ${LAT}; color: #000; padding-top: 3px;
`;
const BookQty = styled.span`
  font: 25px ${LAT}; color: #2f5ea6; text-align: right; padding-top: 3px;
`;
const Stats = styled.div`
  height: 263px; flex: none; border-bottom: 1px solid #999; display: grid; grid-template-columns: 133px 1fr; grid-auto-rows: 26px; padding-bottom: 3px;
`;
const StatCell = styled.div`
  display: flex; justify-content: space-between; align-items: center; padding: 0 ${(p) => (p.$right ? 10 : 9)}px 0 ${(p) => (p.$right ? 9 : 2)}px;
  line-height: 22px; ${(p) => !p.$right && 'border-right: 1px dashed #888;'}
`;
const StatLabel = styled.span`
  font-size: 17px; color: #333; display: flex; align-items: center;
`;
const StatValue = styled.span`
  font: bold 16px ${LAT}; color: ${(p) => p.$c};
`;
const TinyCaret = styled.i`
  width: 0; height: 0; border: 5px solid transparent; border-top: 6px solid #aaa; margin: 6px 0 0 2px;
`;
const TradeSection = styled.div`
  height: ${(p) => p.$h}px; flex: none; ${(p) => p.$line && 'border-bottom: 1px solid #999;'}
`;
const TradeGrid = styled.div`
  display: grid; grid-template-columns: 101px 45px 51px 43px 46px; height: ${(p) => p.$h || 34}px; align-items: center; font-size: 17px; color: #333; line-height: 22px;
`;
const Tc = styled.span`
  text-align: ${(p) => (p.$l ? 'left' : 'right')}; padding-left: ${(p) => (p.$l ? 5 : 0)}px; white-space: nowrap;
`;
const TradeVal = styled.span`
  font: bold 16px/22px ${LAT}; color: ${(p) => p.$c}; text-align: right; white-space: nowrap;
  ${(p) => p.$time && 'text-align: left;'}
`;
const TradeSide = styled.span`
  font-size: 17px; color: #4a75b5; text-align: right;
`;
const DetailTabs = styled.div`
  display: flex; padding-left: 13px; height: 20px; flex: none; margin-top: -1px;
`;
const DetailTab = styled.div`
  width: 56px; height: 20px; position: relative; text-align: center; font-size: 16px; line-height: 17px; color: #333; flex: none;
`;
const DetailShape = styled.svg`
  position: absolute; left: 0; top: 0; overflow: visible;
`;
const DetailLabel = styled.span`
  position: relative;
`;

/* board & status */
const BoardBar = styled.div`
  height: 33px; flex: none; display: flex; align-items: stretch; padding-left: 36px; font-size: 15px; color: #333;
`;
const BoardTab = styled.span`
  padding: 0 7.5px; line-height: 32px; white-space: nowrap;
  ${(p) => p.$on && `color: ${BLUE}; border-bottom: 2px solid ${BLUE};`}
`;
const BoardPlus = styled.span`
  margin-left: 8px; font: bold 22px/30px ${LAT}; color: #666;
`;
const ForumLink = styled.span`
  margin-left: auto; margin-right: 15px; display: flex; align-items: center; gap: 6px; color: ${BLUE}; font-size: 15px;
`;
const StatusBar = styled.div`
  height: 35px; flex: none; background: #fff; display: flex; align-items: center; position: relative;
`;
const WebLogo = styled.div`
  width: 126px; padding-left: 6px; font: bold 20px ${LAT}; letter-spacing: -1.3px; color: #1d63b5; flex: none; display: flex; align-items: flex-end;
`;
const WebS = styled.span`
  font-size: 29px; line-height: 23px; font-style: italic; margin: 0 -1px;
`;
const Ticker = styled.span`
  font-size: 15.5px; color: ${(p) => p.$c}; margin-left: ${(p) => p.$ml || 0}px; white-space: nowrap;
`;
const TickerVal = styled.span`
  font: bold 14.8px ${MONO}; color: ${(p) => p.$c}; margin-left: ${(p) => p.$ml}px; white-space: nowrap;
`;
const Notice = styled.span`
  position: absolute; left: 1158px; font-size: 15px; color: #3a6aa8; white-space: nowrap;
`;
const StatusRight = styled.div`
  margin-left: auto; display: flex; align-items: center; padding-right: 22px;
`;
const AcctBtn = styled.span`
  width: 68px; height: 24px; background: #bdd0e5; border: 1px solid #c9d3de; font-size: 15px; line-height: 22px; text-align: center;
  margin-left: 3px; color: #333;
`;
const VRule = styled.i`
  width: 1px; height: 20px; background: #d00; margin: 0 15px 0 12px;
`;
const Clock = styled.span`
  font: 15.5px ${LAT}; color: #000; margin-left: 9px; white-space: nowrap;
`;

/* taskbar */
const Taskbar = styled.div`
  height: 50px; flex: none; background: linear-gradient(90deg, #03161f, #021019); display: flex; align-items: stretch; padding-left: 0; margin-left: 0; position: relative;
`;
const TaskCell = styled.div`
  width: 62px; flex: none; position: relative; display: flex; align-items: center; justify-content: center;
  background: ${(p) => (p.$on ? '#33454f' : 'transparent')};
  ${(p) => p.$run && `&::after { content: ''; position: absolute; bottom: 0; left: ${p.$on ? 0 : 6}px; right: ${p.$on ? 0 : 6}px; height: 3px; background: #6fb0de; }`}
`;
const TaskStart = styled.div`
  width: 60px; flex: none; display: flex; align-items: center; justify-content: center;
`;
const Tray = styled.div`
  margin-left: auto; display: flex; align-items: center; padding-right: 30px;
`;
const TrayCell = styled.div`
  width: ${(p) => p.$w || 30}px; margin-right: ${(p) => p.$mr || 0}px; display: flex; align-items: center; justify-content: center; color: #fff; font-size: 18px;
`;
const ClockBox = styled.div`
  width: 88px; margin-right: 8px; color: #e8eef2; text-align: center; font: 15.5px/22px ${LAT};
`;
const Watermark = styled.span`
  position: absolute; right: 15px; bottom: 6px; font: 14px ${LAT}; color: rgba(190,190,190,.6); white-space: nowrap;
`;

/* ---------- icons ---------- */
const Ic = ({ children, s = 24, sw = 1.5 }) => (
  <svg width={s} height={s} viewBox="0 0 24 24" fill="none" stroke="#333" strokeWidth={sw}>{children}</svg>
);

const LinkIcon = () => (
  <svg width="20" height="10" viewBox="0 0 20 10" fill="none" stroke="#333" strokeWidth="1.8" style={{ flex: 'none' }}>
    <rect x="1" y="1.5" width="11" height="7" rx="2.5" />
    <rect x="8" y="1.5" width="11" height="7" rx="2.5" />
  </svg>
);
const Chevron = ({ c = '#333', s = 10 }) => (
  <svg width={s} height="7" viewBox="0 0 10 7" fill="none" stroke={c} strokeWidth="1.3"><path d="M1 1l4 4.5L9 1" /></svg>
);
const DownArrow = () => (
  <svg width="12" height="22" viewBox="0 0 12 22" fill="none">
    <path d="M6 0V19" stroke="#0a7a0a" strokeWidth="1.5" />
    <path d="M1.5 13L6 22L10.5 13L6 16Z" fill="#0a7a0a" />
  </svg>
);
const SortArrow = () => (
  <svg width="9" height="20" viewBox="0 0 9 20" fill="none" stroke="#3567ae" strokeWidth="1.2" style={{ verticalAlign: -4 }}>
    <path d="M4.5 0v19M0.5 13l4 6 4-6" />
  </svg>
);
const WhLogo = ({ s = 20, h = 20 }) => (
  <svg width={s} height={h} viewBox="0 0 20 20" style={{ flex: 'none' }}>
    <rect width="20" height="20" fill="#12245a" />
    <rect width="13" height="20" y="0" fill="#101010" />
    <rect x="0" y="8" width="13" height="12" fill="#c0171d" />
    <rect x="13" width="7" height="20" fill="#1c4fa0" />
    <text x="1" y="15" fontSize="9.5" fontWeight="bold" fontStyle="italic" fill="#fff" fontFamily="Liberation Sans">wh</text>
    <text x="12" y="17" fontSize="17" fontStyle="italic" fill="#fff" fontFamily="Liberation Serif">6</text>
  </svg>
);

const toolIcons = [
  <Ic key="b" sw={1.4}><path d="M22 12H3M11 3.5L2.5 12l8.5 8.5" stroke="#444" /></Ic>,
  <Ic key="l"><rect x="3.5" y="1.5" width="17" height="21" /><path d="M6 9h3.5M11 9h7M6 13h3.5M11 13h7M6 17h3.5M11 17h7" /></Ic>,
  <Ic key="m" s={26}><path d="M2 21.5H24M3 17l6-5 4 3 8-8" /></Ic>,
  <Ic key="c"><rect x="3" y="7" width="6" height="11" /><path d="M6 2v5M6 18v5M17 3v5M17 14v4" /><rect x="14" y="8" width="6" height="6" /></Ic>,
  <ToolCjk key="弹">弹</ToolCjk>,
  <ToolCjk key="单" $box>单</ToolCjk>,
  <Ic key="s"><path d="M2 2h17l3 3v17H2z" /><path d="M7 2v7h10V2M2 15h20" /></Ic>,
  <Ic key="r"><path d="M9 3.5A9.5 9.5 0 1 0 17 4.5" /><path d="M9 1L6.5 5 11 5.5" /></Ic>,
  <Ic key="z"><path d="M2 20h10M2 15l6-7 4 3 6-6" /><circle cx="18.5" cy="18" r="3.2" strokeDasharray="6 1.5" /></Ic>,
  <ToolGlyph key="1">1</ToolGlyph>,
  <ToolGlyph key="3">3</ToolGlyph>,
  <ToolGlyph key="5">5</ToolGlyph>,
  <ToolGlyph key="15">15</ToolGlyph>,
  <ToolGlyph key="1h">1h</ToolGlyph>,
  <ToolCjk key="日">日</ToolCjk>,
  <ToolCjk key="周">周</ToolCjk>,
  <ToolCjk key="月">月</ToolCjk>,
  <ToolCjk key="自">自</ToolCjk>,
  <Ic key="oo"><path d="M10 3L2 12l8 9zM14 3l8 9-8 9z" /></Ic>,
  <Ic key="xx"><path d="M2 3l8 9-8 9zM22 3l-8 9 8 9z" /></Ic>,
  <Ic key="lf"><path d="M11 3L2 12l9 9v-5h10V8H11z" /></Ic>,
  <Ic key="rg"><path d="M13 3l9 9-9 9v-5H3V8h10z" /></Ic>,
  <Ic key="up"><path d="M3 12l9-9 9 9M3 21l9-9 9 9" /></Ic>,
  <Ic key="dn"><path d="M3 3l9 9 9-9M3 12l9 9 9-9" /></Ic>,
  <Ic key="lay"><rect x="2" y="2" width="20" height="20" /><path d="M13 2v20M2 12h11M16 7h4M16 12h4M16 17h4" /></Ic>,
  <Ic key="sl" sw={1.2}><path d="M3 21L21 3" /></Ic>,
  <Ic key="hl" sw={1.5}><path d="M2 12h20" /></Ic>,
  <Ic key="sp" sw={1.4}><path d="M4 20L20 4" /><circle cx="4" cy="20" r="1.8" fill="#333" /><circle cx="20" cy="4" r="1.8" fill="#333" /></Ic>,
  <Ic key="ra" sw={1.4}><path d="M3 4l17 17" /><path d="M20 21v-5l-5 5z" fill="#333" /></Ic>,
  <Ic key="rc" sw={1.6}><rect x="3" y="5" width="18" height="15" /></Ic>,
  <RedSwatch key="rd" />,
  <Ic key="mo" sw={0}><circle cx="4" cy="13" r="1.5" fill="#333" /><circle cx="12" cy="13" r="1.5" fill="#333" /><circle cx="20" cy="13" r="1.5" fill="#333" /></Ic>,
];

const TabShape = ({ active, h = 107 }) => (
  <SideShape width="32" height={h} viewBox={`0 0 32 ${h}`}>
    <path d={`M32 0.5H10Q0.5 0.5 0.5 10V${h - 33}L32 ${h - 1}`} fill={active ? PANEL : CHROME} stroke="#9a9a9a" />
  </SideShape>
);

const SideTab = ({ chars, active, rot }) => (
  <SideTabBox>
    <TabShape active={active} />
    {chars.map((c) => <SideChar key={c}>{c}</SideChar>)}
    {rot && <SideRot>{rot}</SideRot>}
  </SideTabBox>
);

const rows = [
  ['45', '豆油2209', '-1.89%', '-5.68亿', '11112', '5', '1', 31],
  ['46', '锰硅2209', '-1.92%', '1.99亿', '8388', '1'],
  ['47', '鸡蛋2209', '-1.93%', '7675万', '4720', '20'],
  ['48', '燃料油2209', '-2.24%', '-7.45亿', '4328', '11'],
  ['49', '沪银2206', '-2.41%', '-2.26亿', '4821', '4'],
  ['50', '沪锌2206', '-2.45%', '-8748万', '26860', '6', '2', 31],
  ['51', '豆二2206', '-2.47%', '-120万', '5170', '1'],
  ['52', '强麦2303', '-2.68%', '116万', '3411', '1'],
  ['53', '500股指2205', '-2.71%', '-5.32亿', '5504.2', '3', '5', 25],
  ['54', '焦炭2209', '-2.71%', '9190万', '3458.0', '1', '3', 25],
  ['55', '棉花2209', '-2.87%', '-40.02亿', '21300', '4', '2', 31],
  ['56', '焦煤2209', '-2.97%', '3053万', '2725.0', '2', '2', 25],
  ['57', '300股指2205', '-3.02%', '-12.15亿', '3880.2', '2', '3', 25],
  ['58', '线材2210', '-3.05%', '13万', '5218', '1'],
];

const statRows = [
  ['最新', '21300', GREEN, '涨跌', '-630/2.87%', GREEN],
  ['现手', '4', BLUE, '速涨', '-0.09%', GREEN],
  ['总量', '311657', BLUE, '开盘', '21885', GREEN],
  ['持仓', '312464', BLUE, '最高', '21885', GREEN],
  ['日增', '-47157', BLUE, '最低', '21280', GREEN],
  ['外盘', '133850', BLUE, '结算价', '21490', GREEN],
  ['比例', '43%', BLUE, '昨收', '21895', '#000'],
  ['内盘', '177807', BLUE, '昨结', '21930', '#000'],
  ['比例', '57%', BLUE, '涨停', '23905', RED],
  ['杠杆', '-----', BLUE, '跌停', '19955', GREEN],
];

const boards = ['我的板块', '01黑色系', '02郑棉', '03所有品种', '04油脂', '05原油', '06豆粕菜粕', '07螺纹', '08玻璃纯碱', '09贵金属', '10期权持仓'];

const ChartHeader = ({ period, h, showPrice = true }) => (
  <ChartHead $h={h}>
    <NameBlock>
      <LinkIcon />
      <NameText>棉花2209<HeadSup>M</HeadSup><MonoText>(CZCE CF209)</MonoText></NameText>
    </NameBlock>
    <Period>{period}<Chevron /></Period>
    {showPrice && <HeadNum>21300</HeadNum>}
    {showPrice && <HeadNum>-630 / -2.87%</HeadNum>}
  </ChartHead>
);

const MaHead = () => <LegendHead>MA组合(5,10,20,40,60,0)<Chevron c="#3f73e0" /></LegendHead>;

const Weekly = () => (
  <PanelBox $w={561}>
    <ChartCol $w={555}>
      <ChartHeader period="周线" h={25} />
      <WeekChart />
      <Legend $left={70} $top={26}>
        <MaHead />
        <LegendItem $c="#000">MA5 21388.00</LegendItem>
        <LegendItem $c={MA_BLUE}>MA10 20975.00</LegendItem>
      </Legend>
    </ChartCol>
    <ScrollStrip />
  </PanelBox>
);

const Five = () => (
  <PanelBox $w={758}>
    <ChartCol $w={751}>
      <ChartHeader period="5分钟" h={25} />
      <FiveChart />
      <Legend $left={70} $top={26}>
        <MaHead />
        <LegendItem $c="#000">MA5 21315.00</LegendItem>
        <LegendItem $c={MA_BLUE}>MA10 21317.00</LegendItem>
        <LegendItem $c={MAGENTA}>MA20 21317.75</LegendItem>
      </Legend>
    </ChartCol>
    <ScrollStrip />
  </PanelBox>
);

const Hour = () => (
  <PanelBox $w={563} $end>
    <ChartCol $w={556}>
      <ChartHeader period="1小时" h={25} />
      <HourChart />
      <Legend $left={70} $top={26}>
        <MaHead />
        <LegendItem $c="#000">MA5 21378.00</LegendItem>
        <LegendItem $c={MA_BLUE}>MA10 21627.00</LegendItem>
      </Legend>
    </ChartCol>
    <ScrollStrip />
  </PanelBox>
);

const TaskIcons = {
  win: (
    <svg width="22" height="22" viewBox="0 0 22 22" fill="#fff">
      <path d="M0 3.2L9 2v8.5H0zM10 1.9L22 0v10.5H10zM0 11.5h9V20L0 18.8zM10 11.5h12V22l-12-1.9z" />
    </svg>
  ),
  search: (
    <svg width="24" height="26" viewBox="0 0 24 26" fill="none" stroke="#fff" strokeWidth="1.3">
      <circle cx="14" cy="10" r="8" /><path d="M9 16L2 25" />
    </svg>
  ),
  task: (
    <svg width="24" height="26" viewBox="0 0 24 26" fill="none" stroke="#fff" strokeWidth="1.3">
      <path d="M1 1h15M1 25h15" /><rect x="1" y="8" width="14" height="10" /><path d="M21 2v6M21 11v4M21 18v6" />
    </svg>
  ),
  snip: (
    <svg width="30" height="40" viewBox="0 0 30 40">
      <path d="M8 2C18-2 29 4 28 14S18 24 10 24 -2 9 8 2z" fill="#f4f0ee" stroke="#b44" />
      <path d="M8 5l10 15M14 4l6 14M20 5l1 13" stroke="#c33" />
      <path d="M4 20c4 6 11 4 13 1" stroke="#888" fill="none" strokeWidth="3" />
      <path d="M16 20l7 11M24 20l-6 11" stroke="#4a7ac0" strokeWidth="1.6" />
      <circle cx="16" cy="34" r="3.5" fill="none" stroke="#2a6fc0" strokeWidth="1.8" />
      <circle cx="25" cy="33" r="3.5" fill="none" stroke="#2a6fc0" strokeWidth="1.8" />
    </svg>
  ),
  chrome: (
    <svg width="34" height="34" viewBox="0 0 34 34">
      <circle cx="17" cy="17" r="16" fill="#e33b2e" />
      <path d="M17 17L3.2 25A16 16 0 0 1 3 9.5z" fill="#e33b2e" />
      <path d="M17 17L3.2 25A16 16 0 0 0 17 33L25 19z" fill="#2ea84f" />
      <path d="M17 17l8 14A16 16 0 0 0 32 11H17z" fill="#f8c912" />
      <circle cx="17" cy="17" r="7.8" fill="#fff" />
      <circle cx="17" cy="17" r="6" fill="#4a89e8" />
    </svg>
  ),
  app: (
    <svg width="28" height="30" viewBox="0 0 28 30">
      <rect x="1" y="2" width="26" height="26" rx="1" fill="#39a4e0" />
      <rect x="3" y="4" width="22" height="22" fill="#bfe2f5" />
      <circle cx="9" cy="11" r="4" fill="#1e88d4" />
      <path d="M9 11V7a4 4 0 0 1 4 4z" fill="#f2a33a" />
      <path d="M15 8h8M15 11h8M5 18h18M5 21h18" stroke="#1e88d4" strokeWidth="1.4" />
    </svg>
  ),
  ie: (
    <svg width="32" height="36" viewBox="0 0 32 36">
      <circle cx="16" cy="18" r="14.5" fill="#5cc23b" />
      <circle cx="16" cy="18" r="10" fill="#fff" />
      <path d="M8 18h16.5a8.5 8.5 0 0 0-17 0c0 5 3.5 9 8.5 9 4 0 6.8-2 8-5h-4c-.8 1.3-2.2 2-4 2-3 0-4.7-2.6-4.7-4z" fill="#5cc23b" />
      <path d="M4 30C0 24 16 4 28 2c3 0 3 3 1 7" fill="none" stroke="#3a9e2a" strokeWidth="1.5" />
    </svg>
  ),
  lp: (
    <svg width="32" height="36" viewBox="0 0 32 36">
      <ellipse cx="16" cy="18" rx="15" ry="17" fill="#d9141a" />
      <path d="M9 12v12M13 10v14M18 12c4-1 6 1 5 4s-3 3-5 3M18 12v14" stroke="#fff" strokeWidth="1.8" fill="none" />
    </svg>
  ),
  v: (
    <svg width="32" height="36" viewBox="0 0 32 36">
      <path d="M1 2h9l6 17 4-17h11l-9 28H11z" fill="#e8281e" />
      <path d="M13 8h6l-4 14z" fill="#1c1c1c" />
      <rect x="16" y="20" width="12" height="14" rx="2" fill="#e97a7a" />
      <text x="19" y="32" fontSize="11" fontFamily="Liberation Sans" fill="#fff">?</text>
    </svg>
  ),
  wx: (
    <svg width="34" height="34" viewBox="0 0 34 34">
      <ellipse cx="13" cy="13" rx="12" ry="11" fill="#58d24f" />
      <path d="M7 22l-1 6 6-4z" fill="#58d24f" />
      <circle cx="9" cy="11" r="1.6" fill="#123" /><circle cx="16" cy="11" r="1.6" fill="#123" />
      <ellipse cx="23" cy="22" rx="10" ry="9" fill="#f1f1f1" />
      <path d="M27 29l3 4-1-6z" fill="#f1f1f1" />
      <circle cx="19.5" cy="21" r="1.4" fill="#777" /><circle cx="26" cy="21" r="1.4" fill="#777" />
    </svg>
  ),
};

export default function App() {
  return (
    <>
      <Global />
      <Window>
        <TitleBar>
          <LogoWrap><WhLogo /></LogoWrap>
          <TitleText $w={224}>赢顺云端交易&nbsp;&nbsp;-&nbsp;&nbsp;Ver6.8.348</TitleText>
          <TitleText $w={175}>文华云节点-中国移动1</TitleText>
          <TitleText $w={100}>03所有品种</TitleText>
          <Pill>{Array.from({ length: 10 }, (_, i) => <PillTick key={i} />)}</Pill>
          <WinControls>
            <WinBtn><svg width="14" height="2"><rect width="14" height="1" fill="#333" /></svg></WinBtn>
            <WinBtn><svg width="13" height="14" viewBox="0 0 13 14" fill="none" stroke="#333"><rect x="0.5" y="3.5" width="9" height="10" /><path d="M3 3V.5h9.5v10H10" /></svg></WinBtn>
            <WinBtn><svg width="14" height="14" viewBox="0 0 14 14" stroke="#333"><path d="M1 1l12 12M13 1L1 13" /></svg></WinBtn>
          </WinControls>
        </TitleBar>
        <Toolbar>
          {toolIcons.map((ic, i) => <ToolBtn key={i}>{ic}</ToolBtn>)}
          <MenuGroup>
            <MenuItem $w={30}>发现<NewBadge>NEW</NewBadge></MenuItem>
            <MenuItem $ml={42} $w={30}>板块</MenuItem>
            <MenuItem $ml={15} $w={30}>账户</MenuItem>
            <MenuItem $ml={121} $w={60}>系统工具</MenuItem>
            <MenuItem $ml={16} $w={30}>帮助</MenuItem>
          </MenuGroup>
          <UploadFloat>
            <UploadIcon>
              <svg width="26" height="22" viewBox="0 0 26 22" fill="none" stroke="#fff" strokeWidth="3">
                <circle cx="13" cy="6.5" r="4.5" /><circle cx="7" cy="15" r="4.5" /><circle cx="19" cy="15" r="4.5" />
              </svg>
            </UploadIcon>
            <UploadText>拖拽上传</UploadText>
          </UploadFloat>
        </Toolbar>
        <Main>
          <SideTabs>
            <SideTab chars={['自', '定', '义']} active />
            <SideTab chars={['股', '票']} />
            <SideTab chars={['期', '货']} />
            <SideTab chars={['外', '盘']} />
            <SideTab chars={['银', '行']} rot="OTC" />
            <SideTab chars={['期', '权']} />
          </SideTabs>
          <Content>
            <TopRow>
              <WatchOuter>
                <WatchFrame>
                  <WatchHead>
                    <HeadGrid>
                      <Th $col={2} $a="center">序号</Th>
                      <Th $col={3} $pr={12}>合约名称</Th>
                      <Th $col={4} $a="left" $pl={25}>涨幅<ThSmall>%</ThSmall><SortArrow /></Th>
                      <Th $col={5}>资金流向</Th>
                      <Th $col={6}>最新</Th>
                      <Th $col={7}>现手</Th>
                      <Th $col={8} $pl={21} $a="left">&gt;&gt;</Th>
                    </HeadGrid>
                  </WatchHead>
                  <Rows>
                    {rows.map((r, i) => (
                      <Row key={r[0]} $white={i % 2 === 0} $sel={r[0] === '55'}>
                        <ArrowCell><DownArrow /></ArrowCell>
                        <SeqCell>{r[0]}</SeqCell>
                        <NameCell>{r[1]}<Sup>M</Sup></NameCell>
                        <PctCell>{r[2]}</PctCell>
                        <FlowCell>{r[3]}</FlowCell>
                        <LastCell>{r[4]}</LastCell>
                        <HandCell>{r[5]}</HandCell>
                        <ExtraCell $pl={r[7] || 0}>{r[6] || ''}</ExtraCell>
                      </Row>
                    ))}
                  </Rows>
                  <Scroll />
                  <WatchTabs>
                    <WatchTab $w={51}>自选</WatchTab>
                    <WatchTab $on>主力合约</WatchTab>
                    <WatchTab>交易合约</WatchTab>
                    <WatchTab>预警合约</WatchTab>
                    <WatchTab>浏览记录</WatchTab>
                    <span>…</span>
                  </WatchTabs>
                </WatchFrame>
              </WatchOuter>
              <ChartCol $w={1016}>
                <ChartHeader period="日线" h={24} showPrice={false} />
                <MainChart />
                <Legend $left={70} $top={24}>
                  <MaHead />
                  <LegendItem $c="#000">MA5 21563.00</LegendItem>
                  <LegendItem $c={MA_BLUE}>MA10 21433.00</LegendItem>
                  <LegendItem $c={MAGENTA}>MA20 21310.25</LegendItem>
                  <LegendItem $c={GREEN}>MA40 20938.25</LegendItem>
                  <LegendItem $c="#808080">MA60 20797.42</LegendItem>
                </Legend>
                <Legend $left={70} $top={423}>
                  <LegendHead $mr={3}>MV(10,20)<Chevron c="#3f73e0" /></LegendHead>
                  <LegendItem $c="#000">311657.00(43:57)</LegendItem>
                  <LegendItem $c="#000" $ml={4}>166430.11</LegendItem>
                  <LegendItem $c={MA_BLUE}>121006.89</LegendItem>
                </Legend>
              </ChartCol>
              <Quote>
                <QuoteBox>
                  <QuoteHead><MBadge>M</MBadge><span>棉花2209</span><span>CF209</span></QuoteHead>
                  <BookRow><BookLabel>卖出</BookLabel><BookPrice>21305</BookPrice><BookQty>12</BookQty></BookRow>
                  <BookRow><BookLabel>买入</BookLabel><BookPrice>21300</BookPrice><BookQty>714</BookQty></BookRow>
                  <Stats>
                    {statRows.map((s, i) => (
                      <React.Fragment key={i}>
                        <StatCell><StatLabel>{s[0]}</StatLabel><StatValue $c={s[2]}>{s[1]}</StatValue></StatCell>
                        <StatCell $right><StatLabel>{s[3]}{s[3] === '结算价' && <TinyCaret />}</StatLabel><StatValue $c={s[5]}>{s[4]}</StatValue></StatCell>
                      </React.Fragment>
                    ))}
                  </Stats>
                  <TradeSection $h={72} $line>
                    <TradeGrid><Tc $l>时间</Tc><Tc>价位</Tc><Tc>大单</Tc><Tc>增仓</Tc><Tc>开平</Tc></TradeGrid>
                  </TradeSection>
                  <TradeSection $h={80}>
                    <TradeGrid><Tc $l>时间</Tc><Tc>价位</Tc><Tc>现手</Tc><Tc>增仓</Tc><Tc>开平</Tc></TradeGrid>
                    <TradeGrid $h={20}>
                      <TradeVal $c="#222" $time>&gt;14:59:59</TradeVal>
                      <TradeVal $c={GREEN}>21300</TradeVal>
                      <TradeVal $c={GREEN}>4</TradeVal>
                      <TradeVal $c={BLUE}>-2</TradeVal>
                      <TradeSide>多平</TradeSide>
                    </TradeGrid>
                  </TradeSection>
                </QuoteBox>
                <DetailTabs>
                  {['明细', '分价', '分笔', '统计'].map((t, i) => (
                    <DetailTab key={t}>
                      <DetailShape width="60" height="20" viewBox="0 0 60 20">
                        <path d={i === 0 ? 'M0 0L8 19.5H55L63 0' : 'M-3 19.5L3 2M3 19.5H50L56 2'} fill="none" stroke="#999" />
                      </DetailShape>
                      <DetailLabel>{t}</DetailLabel>
                    </DetailTab>
                  ))}
                </DetailTabs>
              </Quote>
            </TopRow>
            <BlackRule />
            <BottomRow>
              <Weekly />
              <Five />
              <Hour />
            </BottomRow>
          </Content>
        </Main>
        <BoardBar>
          {boards.map((b) => <BoardTab key={b} $on={b === '03所有品种'}>{b}</BoardTab>)}
          <BoardPlus>+</BoardPlus>
          <ForumLink>
            <svg width="26" height="26" viewBox="0 0 26 26" fill="none" stroke="#2a5aa5" strokeWidth="2.4">
              <path d="M3 18v-6a10 10 0 0 1 20 0v6" /><rect x="2" y="15" width="4" height="9" rx="2" /><rect x="20" y="15" width="4" height="9" rx="2" />
            </svg>
            论坛提问
          </ForumLink>
        </BoardBar>
        <StatusBar>
          <WebLogo>web<WebS>S</WebS>tock</WebLogo>
          <Ticker $c="#2f9a2f">上证指数</Ticker>
          <TickerVal $c={GREEN} $ml={10}>3001.56 -66.20</TickerVal>
          <Ticker $c={GREEN} $ml={19}>文华商品</Ticker>
          <TickerVal $c={GREEN} $ml={9}>223.00 -3.14</TickerVal>
          <Ticker $c="#333" $ml={43}>CRB指数</Ticker>
          <TickerVal $c="#333" $ml={17}>0.00 0.00</TickerVal>
          <Notice>[提醒]有不法网站/直播间假冒文华进行诈骗</Notice>
          <StatusRight>
            <AcctBtn>期货户</AcctBtn>
            <AcctBtn>外盘户</AcctBtn>
            <VRule />
            <svg width="22" height="20" viewBox="0 0 24 20">
              <rect width="24" height="20" fill="#1f7a1f" />
              <path d="M0 3h24M0 6h24M0 9h24M0 12h24M4 0v20M8 0v20M12 0v20M16 0v20M20 0v20" stroke="#0c3c0c" strokeWidth="1" />
              <rect y="15" width="24" height="5" fill="#2ee02e" />
            </svg>
            <svg width="20" height="22" viewBox="0 0 20 22" fill="#2fb02f" style={{ marginLeft: 8 }}>
              <rect x="0" y="17" width="3" height="4" /><rect x="5" y="13" width="3" height="8" /><rect x="10" y="9" width="3" height="12" /><rect x="15" y="2" width="4" height="19" />
            </svg>
            <Clock>19:20:16 - wh</Clock>
          </StatusRight>
        </StatusBar>
        <Taskbar>
          <TaskStart>{TaskIcons.win}</TaskStart>
          <TaskCell>{TaskIcons.search}</TaskCell>
          <TaskCell>{TaskIcons.task}</TaskCell>
          <TaskCell>{TaskIcons.snip}</TaskCell>
          <TaskCell $run>{TaskIcons.chrome}</TaskCell>
          <TaskCell>{TaskIcons.app}</TaskCell>
          <TaskCell>{TaskIcons.ie}</TaskCell>
          <TaskCell $on $run><WhLogo s={30} h={30} /></TaskCell>
          <TaskCell $run>{TaskIcons.lp}</TaskCell>
          <TaskCell $run>{TaskIcons.v}</TaskCell>
          <TaskCell $run>{TaskIcons.wx}</TaskCell>
          <Tray>
            <TrayCell><svg width="16" height="10" viewBox="0 0 16 10" fill="none" stroke="#fff"><path d="M1 9l7-8 7 8" /></svg></TrayCell>
            <TrayCell>
              <svg width="20" height="22" viewBox="0 0 20 22"><ellipse cx="10" cy="11" rx="10" ry="11" fill="#f2f2f2" /><path d="M5 8v7M8 6v9M12 7v8M15 9v6" stroke="#c33" strokeWidth="1.5" /></svg>
            </TrayCell>
            <TrayCell>
              <svg width="20" height="18" viewBox="0 0 20 18" fill="#fff"><rect x="5" y="5" width="15" height="12" rx="1" /><rect x="2" y="1" width="2" height="5" /><rect x="1" y="6" width="4" height="4" /></svg>
            </TrayCell>
            <TrayCell>
              <svg width="18" height="18" viewBox="0 0 18 18" fill="none" stroke="#ddd"><path d="M1 17A16 16 0 0 1 17 1M4 17A13 13 0 0 1 17 4M7 17A10 10 0 0 1 17 7M10 17a7 7 0 0 1 7-7" /><circle cx="13" cy="16" r="1" fill="#fff" /></svg>
            </TrayCell>
            <TrayCell>
              <svg width="20" height="20" viewBox="0 0 20 20" fill="none" stroke="#fff"><path d="M2 7h3l4-4v14l-4-4H2zM12 7a4 4 0 0 1 0 6M14 4a8 8 0 0 1 0 12" /></svg>
            </TrayCell>
            <TrayCell>中</TrayCell>
            <ClockBox>19:20<br />2022/5/6</ClockBox>
            <TrayCell $w={44} $mr={18}>
              <svg width="20" height="22" viewBox="0 0 20 22" fill="none" stroke="#fff"><rect x="1" y="1" width="18" height="18" /><path d="M6 6v8l6-4z" fill="#fff" /></svg>
            </TrayCell>
            <TrayCell $w={20}>
              <svg width="20" height="22" viewBox="0 0 20 22" fill="none" stroke="#fff"><rect x="1" y="1" width="18" height="18" /></svg>
            </TrayCell>
          </Tray>
          <Watermark>CSDN @yuge1023</Watermark>
        </Taskbar>
      </Window>
    </>
  );
}
